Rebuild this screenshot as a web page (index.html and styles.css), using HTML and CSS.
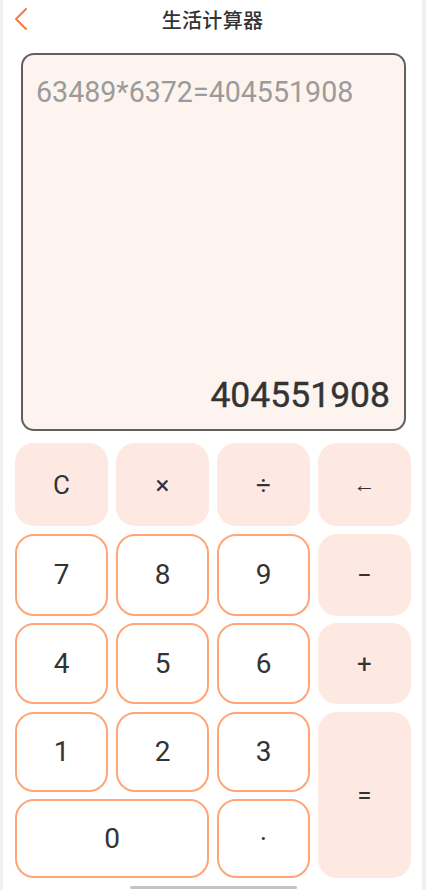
FILE: index.html
```html
<!DOCTYPE html>
<html lang="zh">
<head>
<meta charset="utf-8">
<title>生活计算器</title>
<link rel="stylesheet" href="styles.css">
</head>
<body>
<div class="page">
  <header class="header">
    <button class="back" aria-label="返回">
      <svg width="16" height="24" viewBox="0 0 16 24"><path d="M13 2 L3 12 L13 22" fill="none" stroke="#f47c42" stroke-width="2" stroke-linecap="round" stroke-linejoin="round"/></svg>
    </button>
    <h1 class="title">生活计算器</h1>
  </header>
  <section class="display">
    <div class="expr">63489*6372=404551908</div>
    <div class="result">404551908</div>
  </section>
  <section class="keypad">
    <button class="key op">C</button>
    <button class="key op">×</button>
    <button class="key op">÷</button>
    <button class="key op sm">←</button>
    <button class="key num">7</button>
    <button class="key num">8</button>
    <button class="key num">9</button>
    <button class="key op">−</button>
    <button class="key num">4</button>
    <button class="key num">5</button>
    <button class="key num">6</button>
    <button class="key op">+</button>
    <button class="key num">1</button>
    <button class="key num">2</button>
    <button class="key num">3</button>
    <button class="key op eq">=</button>
    <button class="key num zero">0</button>
    <button class="key num">·</button>
  </section>
  <div class="home-bar"></div>
</div>
</body>
</html>
```
FILE: styles.css
```css
* { box-sizing: border-box; }
html, body { margin: 0; padding: 0; background: #fff; }
body { font-family: Roboto, "Noto Sans", "Noto Sans CJK SC", sans-serif; color: #333; }
.page {
  position: relative;
  width: 426px;
  height: 890px;
  border-left: 3px solid #f1f1f1;
  border-right: 4px solid #efefef;
  background: #fff;
}
.header {
  position: relative;
  height: 40px;
  display: flex;
  align-items: center;
  justify-content: center;
}
.back {
  position: absolute;
  left: 10px;
  top: 7px;
  border: 0;
  background: none;
  padding: 0;
  width: 16px;
  height: 24px;
  display: flex;
  align-items: center;
}
.title {
  margin: 0;
  font-family: "Noto Sans CJK SC", sans-serif;
  font-size: 20px;
  font-weight: 500;
  color: #333;
  letter-spacing: 0.3px;
  position: relative;
  top: -1px;
}
.display {
  margin: 13px 16px 0 18px;
  height: 378px;
  border: 2px solid #606060;
  border-radius: 13px;
  background: #fdf4ef;
  display: flex;
  flex-direction: column;
  justify-content: space-between;
  padding: 20px 14px 13px 13px;
}
.expr {
  font-size: 28.6px;
  line-height: 34px;
  color: #9b9b9b;
}
.result {
  font-size: 35.5px;
  line-height: 42px;
  text-align: right;
  color: #333;
  font-weight: 400;
  -webkit-text-stroke: 0.4px #333;
}
.keypad {
  margin: 12px 11px 0 12px;
  display: grid;
  grid-template-columns: repeat(4, 1fr);
  grid-template-rows: 83px 82px 81px 80px 79px;
  column-gap: 8px;
  row-gap: 7.5px;
}
.key {
  border-radius: 19px;
  font-family: Roboto, "Noto Sans", sans-serif;
  font-size: 28px;
  color: #333;
  display: flex;
  align-items: center;
  justify-content: center;
  padding: 0;
}
.num {
  background: #fff;
  border: 2px solid #ffa576;
}
.op {
  background: #fee9e2;
  border: 0;
  font-size: 26px;
}
.sm { font-size: 22px; }
.eq { grid-row: span 2; }
.zero { grid-column: span 2; }
.home-bar {
  position: absolute;
  left: 127px;
  bottom: 1px;
  width: 167px;
  height: 3px;
  border-radius: 2px;
  background: #c4c4c4;
}
```
